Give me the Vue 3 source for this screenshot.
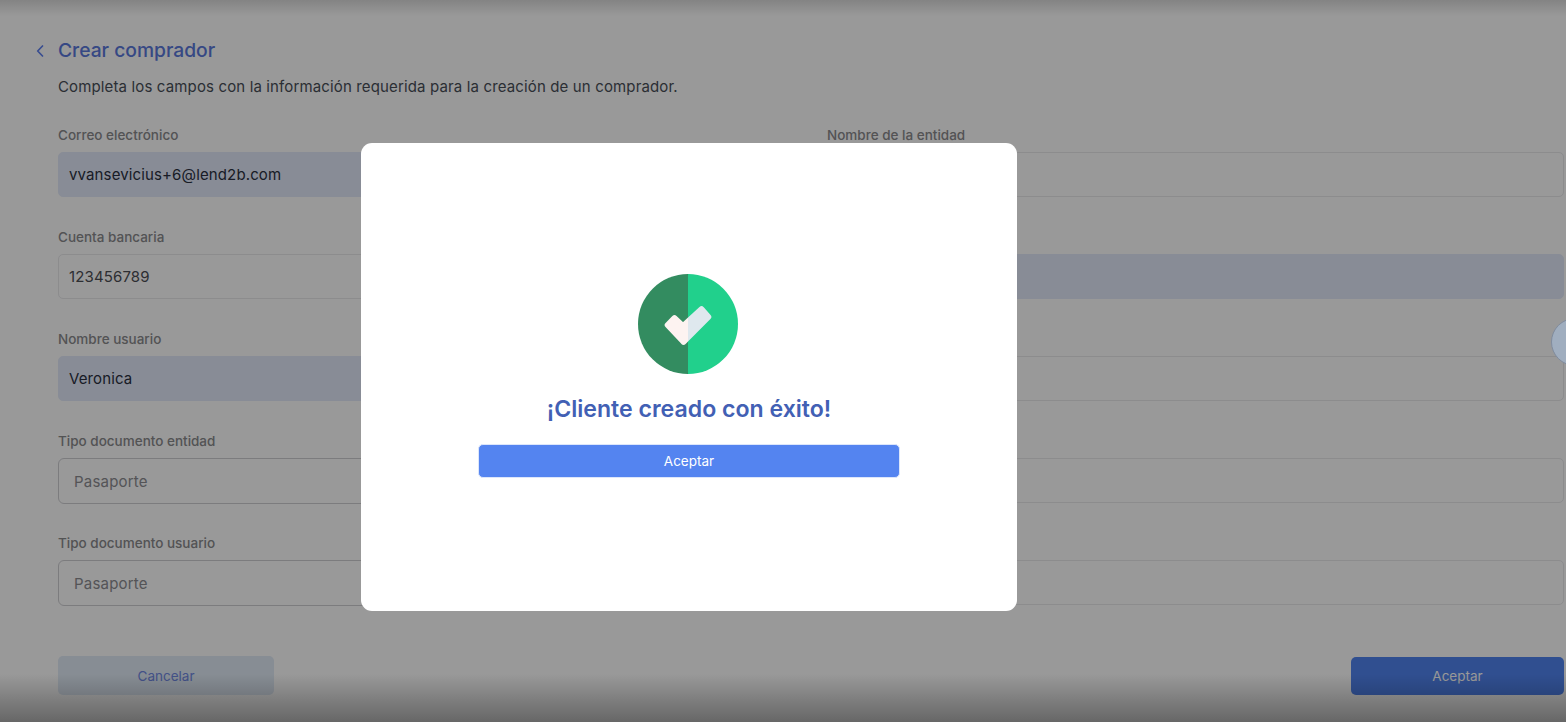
<script setup>
const leftFields = [
  { label: 'Correo electrónico', value: 'vvansevicius+6@lend2b.com', kind: 'filled' },
  { label: 'Cuenta bancaria', value: '123456789', kind: 'plain' },
  { label: 'Nombre usuario', value: 'Veronica', kind: 'filled' },
  { label: 'Tipo documento entidad', value: 'Pasaporte', kind: 'select' },
  { label: 'Tipo documento usuario', value: 'Pasaporte', kind: 'select' }
]
const rightFields = [
  { label: 'Nombre de la entidad', value: '', kind: 'plain' },
  { label: 'Número de documento', value: '', kind: 'filled' },
  { label: 'Apellido usuario', value: '', kind: 'plain' },
  { label: 'Número documento entidad', value: '', kind: 'plain' },
  { label: 'Número documento usuario', value: '', kind: 'plain' }
]
</script>

<template>
  <div class="screen">
    <main class="page">
      <header class="head">
        <svg class="back" width="8" height="12" viewBox="0 0 8 12" fill="none">
          <path d="M6.5 1 1.7 6l4.8 5" stroke="#5f80f0" stroke-width="1.7" stroke-linecap="round" stroke-linejoin="round" />
        </svg>
        <h1 class="title">Crear comprador</h1>
      </header>
      <p class="intro">Completa los campos con la información requerida para la creación de un comprador.</p>
      <div class="form">
        <div class="col">
          <div v-for="f in leftFields" :key="f.label" class="field">
            <label class="label">{{ f.label }}</label>
            <div class="control" :class="f.kind">{{ f.value }}</div>
          </div>
        </div>
        <div class="col">
          <div v-for="f in rightFields" :key="f.label" class="field">
            <label class="label">{{ f.label }}</label>
            <div class="control" :class="f.kind">{{ f.value }}</div>
          </div>
        </div>
      </div>
      <div class="actions">
        <button class="btn cancel">Cancelar</button>
        <button class="btn accept">Aceptar</button>
      </div>
    </main>

    <div class="backdrop"></div>
    <div class="fab"></div>
    <div class="shade-top"></div>
    <div class="shade-bottom"></div>

    <section class="modal">
      <svg class="check" width="100" height="100" viewBox="0 0 100 100">
        <defs>
          <clipPath id="halfL"><rect x="0" y="0" width="50" height="100" /></clipPath>
          <clipPath id="halfR"><rect x="50" y="0" width="50" height="100" /></clipPath>
        </defs>
        <circle cx="50" cy="50" r="50" fill="#338c60" clip-path="url(#halfL)" />
        <circle cx="50" cy="50" r="50" fill="#21d08c" clip-path="url(#halfR)" />
        <path d="M36.5 44.2 45 52.2 63.5 35.2 70.3 43 45.5 67.8 29.7 51Z" fill="#fdf3f1" stroke="#fdf3f1" stroke-width="6" stroke-linejoin="round" clip-path="url(#halfL)" />
        <path d="M36.5 44.2 45 52.2 63.5 35.2 70.3 43 45.5 67.8 29.7 51Z" fill="#dfe8ee" stroke="#dfe8ee" stroke-width="6" stroke-linejoin="round" clip-path="url(#halfR)" />
      </svg>
      <h2 class="success">¡Cliente creado con éxito!</h2>
      <button class="modal-btn">Aceptar</button>
    </section>
  </div>
</template>

<style>
html, body { margin: 0; background: #fff; overflow: hidden; }
</style>

<style scoped>
.screen {
  position: relative;
  width: 1566px;
  height: 722px;
  overflow: hidden;
  background: #fff;
  font-family: Inter, "Liberation Sans", sans-serif;
}
.page {
  box-sizing: border-box;
  height: 722px;
  padding: 38px 2px 0 36px;
}
.head {
  display: flex;
  align-items: center;
  gap: 14px;
  height: 25px;
}
.back { flex: none; }
.title {
  margin: 0;
  font-size: 19.25px;
  line-height: 25px;
  font-weight: 500;
  color: #5a78dc;
}
.intro {
  margin: 13px 0 0 22px;
  font-size: 15px;
  line-height: 22px;
  color: #484e58;
  letter-spacing: 0.14px;
}
.form {
  display: grid;
  grid-template-columns: 737px 737px;
  column-gap: 32px;
  margin: 29px 0 0 22px;
}
.col {
  display: flex;
  flex-direction: column;
}
.field {
  height: 102px;
}
.label {
  display: block;
  height: 17px;
  margin-bottom: 8px;
  font-size: 13.5px;
  line-height: 17px;
  font-weight: 500;
  color: #8a8a8d;
}
.control {
  box-sizing: border-box;
  height: 45px;
  display: flex;
  align-items: center;
  padding: 0 10px;
  border: 1px solid #e9e9ec;
  border-radius: 5px;
  font-size: 15px;
  letter-spacing: 0.13px;
  color: #4c4e54;
}
.control.filled {
  background: #e3eafa;
  border-color: #e3eafa;
  color: #2a3040;
}
.control.select {
  height: 46px;
  padding: 1px 0 0 15px;
  border-color: #cfcfd3;
  color: #8c8c91;
  border-radius: 6px;
  letter-spacing: 0.2px;
}
.actions {
  display: flex;
  justify-content: space-between;
  align-items: flex-end;
  margin: 19px 0 0 22px;
}
.btn {
  height: 38px;
  border: 0;
  border-radius: 5px;
  font-family: inherit;
  font-size: 13.5px;
}
.cancel {
  width: 216px;
  height: 39px;
  background: #e1ebf7;
  color: #7088e2;
}
.accept {
  width: 213px;
  background: #5084f0;
  color: #fff;
}
.fab {
  position: absolute;
  left: 1551px;
  top: 318px;
  width: 48px;
  height: 48px;
  box-sizing: border-box;
  border: 1px solid #808c9e;
  border-radius: 50%;
  background: #a0aebf;
}
.backdrop {
  position: absolute;
  inset: 0;
  background: rgba(0, 0, 0, 0.4);
}
.shade-top {
  position: absolute;
  left: 0;
  right: 0;
  top: 0;
  height: 16px;
  background: linear-gradient(rgba(0, 0, 0, 0.14), rgba(0, 0, 0, 0));
}
.shade-bottom {
  position: absolute;
  left: 0;
  right: 0;
  bottom: 0;
  height: 48px;
  background: linear-gradient(rgba(0, 0, 0, 0), rgba(0, 0, 0, 0.33));
}
.modal {
  position: absolute;
  left: 361px;
  top: 143px;
  width: 656px;
  height: 468px;
  box-sizing: border-box;
  display: flex;
  flex-direction: column;
  align-items: center;
  justify-content: center;
  padding-bottom: 2px;
  border-radius: 11px;
  background: #fff;
}
.check { display: block; margin-left: -2px; }
.success {
  margin: 21px 0 20px;
  font-size: 23.1px;
  line-height: 29px;
  font-weight: 600;
  color: #4260b4;
}
.modal-btn {
  align-self: flex-start;
  margin-left: 117px;
  width: 422px;
  height: 34px;
  border: 1px solid #dce6fb;
  border-radius: 5px;
  background: #5484f0;
  color: #fff;
  font-family: inherit;
  font-size: 13.5px;
}
</style>
